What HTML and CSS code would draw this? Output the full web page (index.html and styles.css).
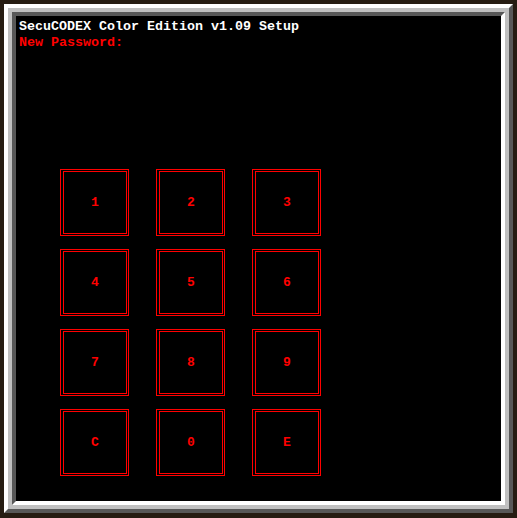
FILE: index.html
```html
<!DOCTYPE html>
<html>
<head>
<meta charset="utf-8">
<link rel="stylesheet" href="styles.css">
</head>
<body>
<div class="frame">
  <div class="frame-mid">
    <div class="frame-in">
      <div class="screen">
        <div class="title">SecuCODEX Color Edition v1.09 Setup</div>
        <div class="prompt">New Password:</div>
        <div class="keypad">
          <div class="key"><div class="key-in">1</div></div>
          <div class="key"><div class="key-in">2</div></div>
          <div class="key"><div class="key-in">3</div></div>
          <div class="key"><div class="key-in">4</div></div>
          <div class="key"><div class="key-in">5</div></div>
          <div class="key"><div class="key-in">6</div></div>
          <div class="key"><div class="key-in">7</div></div>
          <div class="key"><div class="key-in">8</div></div>
          <div class="key"><div class="key-in">9</div></div>
          <div class="key"><div class="key-in">C</div></div>
          <div class="key"><div class="key-in">0</div></div>
          <div class="key"><div class="key-in">E</div></div>
        </div>
      </div>
    </div>
  </div>
</div>
</body>
</html>
```
FILE: styles.css
```css
html, body {
  margin: 0;
  padding: 0;
}
body {
  width: 517px;
  height: 518px;
  background: #261c12;
  overflow: hidden;
}
.frame {
  margin: 4px 0 0 4px;
  width: 509px;
  height: 509px;
  box-sizing: border-box;
  border-style: solid;
  border-width: 4px;
  border-color: #ffffff #585858 #585858 #ffffff;
}
.frame-mid {
  height: 100%;
  box-sizing: border-box;
  border: 4px solid #c0c0c0;
}
.frame-in {
  height: 100%;
  box-sizing: border-box;
  border-style: solid;
  border-width: 4px;
  border-color: #585858 #ffffff #ffffff #585858;
}
.screen {
  height: 100%;
  background: #000000;
  padding: 3px 0 0 3px;
  box-sizing: border-box;
  font-family: "Liberation Mono", "DejaVu Sans Mono", monospace;
  font-weight: bold;
  font-size: 13.33px;
  line-height: 16px;
}
.title {
  color: #ffffff;
}
.prompt {
  color: #ff0000;
}
.keypad {
  margin: 118px 0 0 41px;
  display: grid;
  grid-template-columns: repeat(3, 69px);
  grid-auto-rows: 67px;
  column-gap: 27px;
  row-gap: 13px;
}
.key {
  border: 1px solid #ff0000;
  display: flex;
  padding: 1px 1px 1px 2px;
  box-sizing: border-box;
}
.key-in {
  flex: 1;
  border: 1px solid #ff0000;
  display: flex;
  align-items: center;
  justify-content: center;
  color: #ff0000;
  font-size: 13px;
}
```
